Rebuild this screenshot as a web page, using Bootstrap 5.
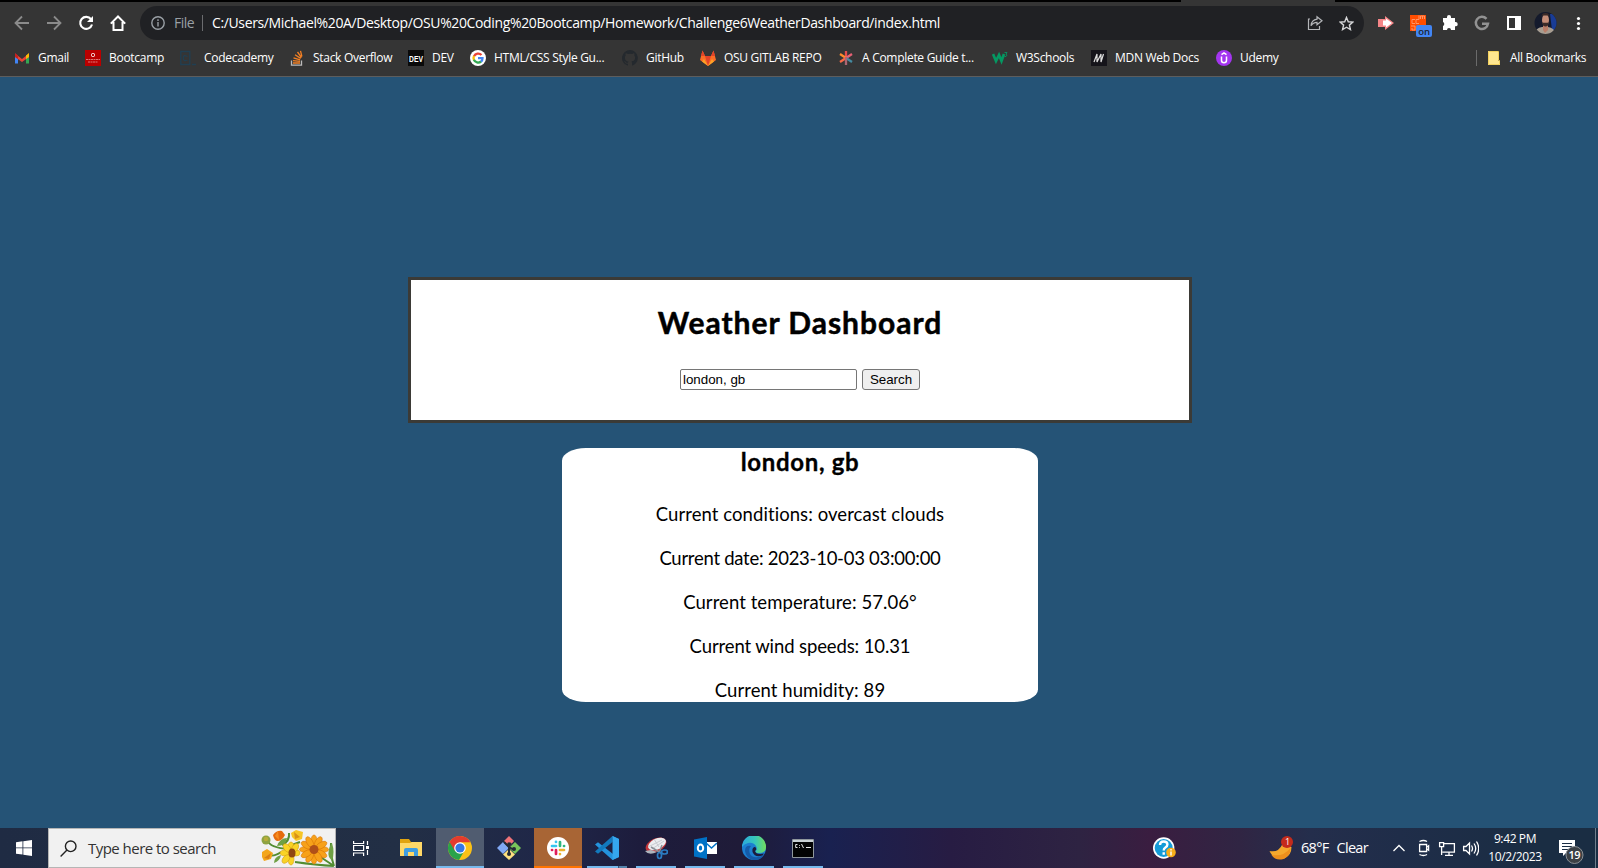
<!DOCTYPE html>
<html lang="en">
<head>
<meta charset="utf-8">
<title>Weather Dashboard</title>
<link rel="stylesheet" href="https://cdn.jsdelivr.net/npm/bootstrap@5.3.0/dist/css/bootstrap.min.css">
<style>
  body { font-family: "Open Sans", "Noto Sans", sans-serif; height: 868px; overflow: hidden; background: #255376; }
  svg { display: block; flex: none; }
  /* Browser chrome */
  .tab-edge { height: 2px; background: #000; }
  .tab-edge i { display: block; width: 154px; height: 2px; margin-left: 1181px; background: #353535; }
  .browser-bar { height: 75px; background: #353535; border-bottom: 1px solid #5d5d5d; color: #fff; }
  .tool-row { height: 41px; padding: 4px 17px 3px 14px; }
  .tool-row > .nav-icons { width: 126px; gap: 16px; }
  .omni { width: 1224px; height: 34px; border-radius: 17px; background: #202124; padding: 0 10px 0 11px; font-size: 14px; }
  .omni .scheme { color: #9aa0a6; letter-spacing: -.5px; width: 28px; margin-left: 9px; }
  .omni .url { letter-spacing: -.37px; margin-left: 9px; white-space: nowrap; }
  .omni .scheme, .omni .url { margin-top: -1px; }
  .omni .bar-line { width: 1px; height: 16px; background: #6b6c6f; }
  .marks-row { display: grid; grid-template-columns: 71px 95px 109px 119px 62px 152px 78px 138px 154px 99px 125px 260px 1fr; height: 30px; padding-left: 14px; align-items: center; font-size: 12px; letter-spacing: -.29px; }
  .marks-row > div { display: flex; align-items: center; gap: 8px; white-space: nowrap; line-height: 16px; }
  /* Weather page */
  .weather-page { height: 751px; padding: 200px 0 0 2px; color: #000; font-variant-ligatures: none; }
  .search-box { width: 784px; height: 146px; border: 3px solid #3b3a36; background: #fff; padding-top: 23px; }
  .search-box h1 { font: bold 30px/38px Lato, sans-serif; letter-spacing: .98px; -webkit-text-stroke: .5px #000; margin: 0 0 28px; }
  .search-box form { gap: 5px; }
  .search-box input { width: 177px; height: 21px; border: 1px solid #767676; border-radius: 2px; padding: 1px 2px; font: 13.333px/15px "Liberation Sans", sans-serif; color: #000; }
  .search-box button { width: 58px; height: 21px; border: 1px solid #767676; border-radius: 3px; padding: 0; background: #efefef; font: 13.333px/15px "Liberation Sans", sans-serif; color: #000; }
  .result-box { width: 476px; height: 254px; margin-top: 25px; background: #fff; border-radius: 5%; font: 18.5px/24px Lato, sans-serif; white-space: nowrap; }
  .result-box h2 { font: bold 24px/28px Lato, sans-serif; letter-spacing: .65px; -webkit-text-stroke: .3px #000; margin: 0 0 26px; }
  .result-box p { margin: 0 0 20px; letter-spacing: .07px; }
  .result-box .ls-date { letter-spacing: -.27px; } .result-box .ls-wind { letter-spacing: -.12px; }
  /* Taskbar */
  .task-bar { height: 40px; color: #fff; background: linear-gradient(90deg, #1f2b43 0, #222f45 400px, #1f2648 560px, #1d1c3c 640px, #1f1b38 740px, #192150 830px, #271c43 950px, #2e2342 1080px, #3a1d40 1150px, #302543 1240px, #242e4c 1310px, #1f2d49 1400px, #1a2d43 1540px); }
  .start-btn { width: 48px; }
  .find-box { width: 288px; height: 40px; margin-right: 2px; background: #f1f1f1; border: 1px solid #b5b5b5; color: #333; font-size: 15px; letter-spacing: -.53px; padding-left: 11px; }
  .find-box span { margin-left: 11px; }
  .app { flex: none; width: 49px; height: 40px; padding-right: 1px; position: relative; }
  .app svg { margin: auto; position: relative; }
  .app.run::after { content: ""; position: absolute; left: 4px; bottom: 0; width: 40px; height: 2px; background: #76b9ed; }
  .app.now::before, .app.alert-on::before { content: ""; position: absolute; inset: 0 1px 0 0; background: #505c70; border-bottom: 2px solid #76b9ed; }
  .app.alert-on::before { background: #a86535; border-color: #ff7300; }
  .app.two::after { background: linear-gradient(90deg, #76b9ed 31px, #1d1c3c 31px, #5484ac 32px); }
  .help-icon { margin: 0 92px 0 325px; }
  .weather-txt { font-size: 14.5px; letter-spacing: -.7px; width: 90px; margin-left: 8px; gap: 8px; white-space: nowrap; }
  .clock { width: 72px; margin-right: 6px; font-size: 12px; line-height: 18px; letter-spacing: -.38px; }
</style>
<script src="https://cdn.jsdelivr.net/npm/bootstrap@5.3.0/dist/js/bootstrap.bundle.min.js"></script>
</head>
<body>
<div class="tab-edge"><i></i></div>
<header class="browser-bar">
  <div class="tool-row d-flex align-items-center">
    <div class="nav-icons d-flex align-items-center">
      <svg width="16" height="16" viewBox="0 0 16 16" fill="none" stroke="#8b8b8b" stroke-width="1.8"><path d="M15 8H2M8 1.5 1.500 8 8 14.500"/></svg>
      <svg width="16" height="16" viewBox="0 0 16 16" fill="none" stroke="#8b8b8b" stroke-width="1.8"><path d="M1 8h13M8 1.500 14.500 8 8 14.500"/></svg>
      <svg width="16" height="16" viewBox="0 0 16 16"><path d="M13 4.200A6 6 0 1 0 14 9.500" fill="none" stroke="#fff" stroke-width="2.100"/><path d="M15 1v6H9z" fill="#fff"/></svg>
      <svg width="16" height="16" viewBox="0 0 16 16" fill="none" stroke="#fff" stroke-width="2"><path d="M.8 8.600 8 1.500l7.200 7.100M3.500 7v8h9V7"/></svg>
    </div>
    <div class="omni d-flex align-items-center">
      <svg width="14" height="14" viewBox="0 0 14 14" fill="none" stroke="#9aa0a6" stroke-width="1.400"><circle cx="7" cy="7" r="6.200"/><path d="M7 6v4.500M7 3.300v1.600"/></svg>
      <span class="scheme">File</span><span class="bar-line"></span>
      <span class="url">C:/Users/Michael%20A/Desktop/OSU%20Coding%20Bootcamp/Homework/Challenge6WeatherDashboard/index.html</span>
      <svg class="ms-auto me-3" width="16" height="16" viewBox="1 0 16 16" fill="none" stroke="#b4b6b9" stroke-width="1.200"><path d="M4 4H2.500v10.500h11V11M11 1.700l5 4-5 4V7.400c-3 0-4.500 1-6 3.300.4-3.700 2.400-6 6-6.500z"/></svg>
      <svg width="15" height="15" viewBox="0 0 16 16" fill="none" stroke="#d4d5d7" stroke-width="1.500"><path d="m8 1.500 1.900 4.600 4.900.4-3.700 3.200 1.100 4.800L8 12l-4.200 2.500 1.100-4.800L1.200 6.500l4.900-.4z"/></svg>
    </div>
    <div class="ms-auto">
      <svg width="203" height="34" viewBox="1378 6 203 34">
        <path d="M1378 19h7v-3l9 7-9 7v-3h-7z" fill="#f58587"/><path d="M1383 20.500h3v-2l6 4.500-6 4.500v-2h-3z" fill="#fff"/>
        <rect x="1410" y="15" width="16" height="16" fill="#ff4d00"/><g fill="none" stroke="#ff9466"><path d="M1415 19.500h-3v4h3M1419 23.500h-3v-4h3v-4M1420.500 19v-3h4v3M1422.500 16v3M1411 26h4v4h-3v-2"/></g>
        <rect x="1416" y="25" width="16" height="12" rx="2" fill="#4285f4"/><text x="1418.300" y="34.800" font-size="9.500" font-weight="600" fill="#1d2430" font-family="Open Sans">on</text>
        <path d="M1443 18h4v-1a2 2 0 0 1 4 0v1h4v4h1a2.200 2.200 0 0 1 0 4.300h-1v3.700h-4a2 2 0 0 0-4 0h-4v-4a2.200 2.200 0 0 0 0-4z" fill="#fff"/>
        <path d="M1486.500 18.800a6.100 6.100 0 1 0 1.500 4.900h-6" fill="none" stroke="#929292" stroke-width="2.500"/>
        <path d="M1508 17h12v12h-12z" fill="none" stroke="#fff" stroke-width="2"/><path d="M1515 17h5v12h-5z" fill="#fff"/>
        <clipPath id="av"><circle cx="1545.500" cy="23" r="11"/></clipPath><g clip-path="url(#av)"><path d="M1534 12h23v23h-23z" fill="#141a2c"/><path d="M1550 14h7v16h-5z" fill="#193c96"/><path d="M1534 35q1-7 8-8h6q7 1 8 8z" fill="#a89e91"/><path d="M1543 24h5v6l-3 3-2-3z" fill="#b97d68"/><ellipse cx="1545.500" cy="20" rx="3.500" ry="6" fill="#c58e78"/><path d="M1541.500 17q0-4 4-4t4 4l-1-1.500h-6zM1542 22.500q3.500.500 7 0l-1 3q-2.500 2-5 0z" fill="#3b2b28"/></g>
        <g fill="#fff"><circle cx="1578.500" cy="18.500" r="1.600"/><circle cx="1578.500" cy="23.500" r="1.600"/><circle cx="1578.500" cy="28.500" r="1.600"/></g>
      </svg>
    </div>
  </div>
  <div class="marks-row">
    <div><svg width="16" height="16" viewBox="0 0 16 16"><path d="M1 4v9.500h3V6z" fill="#4285f4"/><path d="M15 4v9.500h-3V6z" fill="#34a853"/><path d="M1 3.500 8 9l7-5.500V7l-7 5-7-5z" fill="#ea4335"/><path d="M12 5.500 15 3v4l-3 2z" fill="#fbbc04"/><path d="M1 3v4l3 2V5.500z" fill="#c5221f"/></svg><span>Gmail</span></div>
    <div><svg width="16" height="16" viewBox="0 0 16 16"><path d="M0 0h16v16H0z" fill="#bb0000"/><rect x="6.500" y="3.500" width="3" height="3" rx="1" fill="none" stroke="#fff"/><path d="M1 9.500h14M3 12h10" stroke="#dc7777" stroke-dasharray="2 .5"/></svg><span>Bootcamp</span></div>
    <div><svg width="16" height="16" viewBox="0 0 16 16" fill="none" stroke="#203f52" stroke-width="1.300"><path d="M.8 1.500h9v13h-9zM7.500 6.500Q3.300 4 3.300 8t4.200 2M12 14.500h4"/></svg><span>Codecademy</span></div>
    <div><svg width="16" height="16" viewBox="0 0 16 16" fill="none" stroke-width="1.300"><path d="M2.500 10.500v4.700h10v-4.700" stroke="#bcbbbb"/><path d="M4 13h7M4 10.700l7 .7M4.500 7.800l6.600 2M6 4.800l5.700 3.600M8.500 2l4 5.500M11.500.8l1.400 5.700" stroke="#f48024"/></svg><span>Stack Overflow</span></div>
    <div><svg width="16" height="16" viewBox="0 0 16 16"><path d="M0 0h16v16H0z" fill="#0a0a0a"/><text transform="translate(1 11.500) scale(1 1.400)" font-family="Liberation Sans" font-weight="bold" font-size="6.800" letter-spacing="0" fill="#fff">DEV</text></svg><span>DEV</span></div>
    <div><svg width="16" height="16" viewBox="0 0 16 16" fill="none" stroke-width="2.300"><circle cx="8" cy="8" r="8" fill="#fff"/><path d="M4 6.200A4.600 4.600 0 0 1 11.500 5" stroke="#ea4335"/><path d="M4 10a4.600 4.600 0 0 1 0-4" stroke="#fbbc05"/><path d="M3.900 9.800a4.600 4.600 0 0 0 7.200 1.700" stroke="#34a853"/><path d="M8 8.200h4.500a4.600 4.600 0 0 1-1.500 3.500" stroke="#4285f4"/></svg><span>HTML/CSS Style Gu...</span></div>
    <div><svg width="16" height="16" viewBox="0 0 16 16"><path d="M8 0a8 8 0 0 0-2.500 15.600c.4.100.5-.2.500-.4v-1.500c-2.200.5-2.700-.9-2.700-.9-.4-.9-.9-1.200-.9-1.200-.7-.5.100-.5.100-.5.800.100 1.200.8 1.200.8.700 1.200 1.900.9 2.300.7.100-.5.300-.9.500-1.100-1.800-.2-3.600-.9-3.600-4 0-.9.300-1.600.8-2.100-.100-.2-.4-1 .1-2.100 0 0 .7-.2 2.200.8a7.500 7.500 0 0 1 4 0c1.500-1 2.200-.8 2.200-.8.4 1.100.2 1.900.1 2.100.5.600.8 1.300.8 2.100 0 3.100-1.900 3.700-3.700 3.900.3.300.6.800.6 1.500v2.200c0 .2.100.5.600.4A8 8 0 0 0 8 0z" fill="#24292e"/></svg><span>GitHub</span></div>
    <div><svg width="16" height="16" viewBox="0 0 16 16"><path d="m8 16-8-6L2.500.5 5 6h6L13.500.5 16 10z" fill="#fc6d26"/><path d="M8 16 5 6h6z" fill="#e24329"/><path d="m8 16-6-4.500L4 9zM8 16l6-4.500L12 9z" fill="#fca326"/><path d="M2.500.5 5 6H1zM13.500.5 11 6h4z" fill="#e24329"/></svg><span>OSU GITLAB REPO</span></div>
    <div><svg width="16" height="16" viewBox="0 0 16 16" fill="none" stroke-width="2.300"><path d="M8 1v7" stroke="#e64c4c"/><path d="m2 4 6 4" stroke="#ff8a2c"/><path d="m14 4-6 4" stroke="#e76074"/><path d="m2 12 6-4" stroke="#fb6845"/><path d="m14 12-6-4" stroke="#458aa0"/><path d="M8 15V7" stroke="#ae6572"/></svg><span>A Complete Guide t...</span></div>
    <div><svg width="16" height="16" viewBox="0 0 16 16" fill="none" stroke="#059862" stroke-width="2.700"><path d="m1 4 3 7 3-6 2.500 6L12 4"/><path d="M12.500 2.500H15l-1 1.800q2 .5 0 2.200h-1.500" stroke-width=".9"/></svg><span>W3Schools</span></div>
    <div><svg width="16" height="16" viewBox="0 0 16 16"><path d="M0 0h16v16H0z" fill="#15141a"/><path d="M3 12 6 4v8l4-8v8l2.500-8" fill="none" stroke="#ddd" stroke-width="1.200"/></svg><span>MDN Web Docs</span></div>
    <div><svg width="16" height="16" viewBox="0 0 16 16"><circle cx="8" cy="8" r="8" fill="#a435f0"/><path d="M5.500 6.500v3.700q0 2.500 2.500 2.500t2.500-2.500V6.500M5.500 4.700 8 3l2.500 1.700" fill="none" stroke="#fff" stroke-width="1.500"/></svg><span>Udemy</span></div>
    <div><svg width="26" height="18" viewBox="0 0 26 18"><path d="M.5 1v16" stroke="#6b6b6b"/><path d="M12 2h10v10h2v4H12z" fill="#ffe68f"/><path d="M12.500 2.500h10v9h1v4h-11z" fill="none" stroke="#f4d15e"/></svg><span>All Bookmarks</span></div>
  </div>
</header>

<main class="weather-page d-flex flex-column align-items-center text-center">
  <section class="search-box">
    <h1>Weather Dashboard</h1>
    <form class="d-flex justify-content-center">
      <input type="text" value="london, gb"><button type="button">Search</button>
    </form>
  </section>
  <section class="result-box">
    <h2>london, gb</h2>
    <p>Current conditions: overcast clouds</p>
    <p class="ls-date">Current date: 2023-10-03 03:00:00</p>
    <p>Current temperature: 57.06°</p>
    <p class="ls-wind">Current wind speeds: 10.31</p>
    <p>Current humidity: 89</p>
  </section>
</main>

<footer class="task-bar d-flex align-items-center">
  <div class="start-btn"><svg class="mx-auto" width="16" height="16" viewBox="0 0 16 16" fill="#fff"><path d="m0 2.200 6.500-.9v6.200H0zM7.300 1.200 16 0v7.500H7.300zM0 8.300h6.500v6.300L0 13.700zM7.300 8.300H16V16l-8.700-1.300z"/></svg></div>
  <div class="find-box d-flex align-items-center">
    <svg width="17" height="17" viewBox="0 0 17 17" fill="none" stroke="#222" stroke-width="1.400"><circle cx="10.700" cy="6.300" r="5.300"/><path d="M7 10 .6 16.400"/></svg>
    <span>Type here to search</span>
    <svg class="ms-auto" width="74" height="38" viewBox="0 0 74 38">
      <g fill="none" stroke="#528d32" stroke-width="2"><path d="M73 37Q55 36 34 33M73 37Q69 25 70 14M6 11q3 8 22 9M8 26q5 2 12-3M28 4q1 8-7 12M39 13l-11 4M73 37 55 25"/></g>
      <path d="M68 28q-2-7 3-14 3 9 0 18zM13 34q0-6 7-8-1 6-7 8zM16 17q3-8 10-8-1 8-10 8z" fill="#6fa044"/>
      <circle cx="5" cy="11" r="4.500" fill="#8ea342"/><circle cx="5" cy="10" r="2.300" fill="#b7ad3a"/>
      <path d="M12 6q4-5 9-4l3 4q-3 6-8 6-3-1-4-6z" fill="#e56b0d"/><path d="m14 7 3-5 1 9" fill="#f78d20"/>
      <path d="m30 4 5-3 7 2-1 7-6 2-4-4z" fill="#f7c525"/><path d="m34 10-1-7 6 5" fill="#d99216"/>
      <path d="m1 23 5-3 6 4-2 6-7 2-2-4z" fill="#f3a61b"/><path d="m3 29 7-5-2 6" fill="#db7e12"/>
      <g fill="#f9d326" stroke="#d6a010" stroke-width=".6"><ellipse cx="30" cy="18" rx="3" ry="5"/><ellipse cx="30" cy="30" rx="3" ry="6"/><ellipse cx="24" cy="24" rx="5" ry="3"/><ellipse cx="35" cy="24" rx="4" ry="3"/><ellipse cx="26" cy="19" rx="3" ry="5" transform="rotate(-40 26 19)"/><ellipse cx="25" cy="30" rx="3" ry="5" transform="rotate(40 25 30)"/><ellipse cx="34" cy="19" rx="3" ry="5" transform="rotate(30 34 19)"/></g><ellipse cx="31" cy="24" rx="3.500" ry="4.500" fill="#8f4612"/>
      <g fill="#f7a11a" stroke="#d97808" stroke-width=".6"><g id="petals"><ellipse cx="53" cy="12" rx="3" ry="6"/><ellipse cx="53" cy="29" rx="3" ry="6"/><ellipse cx="44.500" cy="20.500" rx="6" ry="3"/><ellipse cx="61.500" cy="20.500" rx="6" ry="3"/></g><use href="#petals" transform="rotate(30 53 20.500)"/><use href="#petals" transform="rotate(60 53 20.500)"/></g><circle cx="53" cy="20.500" r="4.500" fill="#b04f18"/>
    </svg>
  </div>
  <div class="app d-flex"><svg width="18" height="18" viewBox="1 0 18 18" fill="none" stroke="#fff" stroke-width="1.200"><path d="M1.600 2v2.500h10V2M1.600 17v-3h10v3M1.600 6.500h10v5h-10zM15.500 2v4M15.500 11v5"/><path d="M14 7h3v3h-3z" fill="#fff" stroke="none"/></svg></div>
  <div class="app d-flex"><svg width="22" height="20" viewBox="0 0 22 20"><path d="M0 1h9l2 3h11v14H0z" fill="#e2a40f"/><path d="M0 5h10l2-1h10v14H0z" fill="#ffd867"/><path d="M4 18v-6q0-2 2-2h10q2 0 2 2v6h-4v-4H8v4z" fill="#3f9de0"/></svg></div>
  <div class="app now d-flex"><svg width="24" height="24" viewBox="0 0 24 24"><circle cx="12" cy="12" r="12" fill="#fbc116"/><path d="M12 12 1.600 6A12 12 0 0 0 11 24l5.500-9.500z" fill="#29a34a"/><path d="M12 6.200h10.400A12 12 0 0 0 1.600 6L7 15z" fill="#e33b2e"/><circle cx="12" cy="12" r="5.800" fill="#fff"/><circle cx="12" cy="12" r="4.600" fill="#3577e5"/></svg></div>
  <div class="app d-flex"><svg width="24" height="24" viewBox="0 0 24 24"><path d="m12 0 5 5-5 6-5-6z" fill="#ef7378"/><path d="m0 12 6-6 6 6-6 6z" fill="#81a9f5"/><path d="m12 12 6-6 6 6-6 6z" fill="#79c65a"/><path d="m12 13 6 5.500-6 5.500-6-5.500z" fill="#ffe180"/><path d="m7 6 5 5v7m0-7 5 3M12 10l2-3" fill="none" stroke="#252b36" stroke-width="2"/><g fill="#252b36"><circle cx="12" cy="18" r="2"/><circle cx="17" cy="13" r="2"/><circle cx="12" cy="8" r="1.800"/></g></svg></div>
  <div class="app alert-on d-flex"><svg width="22" height="22" viewBox="0 0 22 22"><circle cx="11" cy="11" r="11" fill="#fff"/><g fill="none" stroke-width="2.700" stroke-linecap="round"><path d="M5 9h4M9 4.800v.1" stroke="#36c5f0"/><path d="M13 5v4M17 9h.1" stroke="#2eb67d"/><path d="M13 13h4M13 17v.1" stroke="#ecb22e"/><path d="M9 13v4M5 13h.1" stroke="#e01e5a"/></g></svg></div>
  <div class="app run two d-flex"><svg width="24" height="24" viewBox="0 0 24 24"><path d="M17.500 0 24 3v18l-6.500 3L0 8.500l3-2.300L18 18V6z" fill="#2493dd"/><path d="M0 15.500 17.500 0v6L3 17.800z" fill="#1279bd"/><path d="M17.500 0 24 3v18l-6.500 3z" fill="#35a7ee"/></svg></div>
  <div class="app run d-flex"><svg width="24" height="24" viewBox="0 0 24 24"><ellipse cx="12" cy="9" rx="11" ry="6.500" transform="rotate(-25 12 9)" fill="#c2363b"/><ellipse cx="13" cy="8" rx="9.500" ry="5.400" transform="rotate(-25 13 8)" fill="#eceef0"/><path d="m4 11 14-7M8 13 20 5M10 3l5 8" stroke="#c8cbd0"/><path d="M1 15q4 5 12 1l-6-2z" fill="#aeb5bd"/><path d="m7 11 10 6M18 9l-3 8" stroke="#8b9097" stroke-width="1.500"/><g fill="none" stroke="#2b7cc2" stroke-width="1.700"><ellipse cx="15.500" cy="19.500" rx="2" ry="3"/><ellipse cx="20.500" cy="16" rx="3" ry="2"/></g></svg></div>
  <div class="app run d-flex"><svg width="23" height="22" viewBox="0 0 23 22"><path d="M11 5h12v12H11z" fill="#fff"/><path d="m12 6 5.500 5L23 6" fill="none" stroke="#0072c6" stroke-width="1.500"/><path d="M0 2.500 13 0v22L0 19.500z" fill="#0072c6"/><ellipse cx="6.500" cy="11" rx="2.700" ry="3.500" fill="none" stroke="#fff" stroke-width="2"/></svg></div>
  <div class="app run d-flex"><svg width="24" height="24" viewBox="0 0 24 24"><defs><linearGradient id="eg"><stop stop-color="#2aa8dc"/><stop offset=".55" stop-color="#37c7b9"/><stop offset="1" stop-color="#73dc5c"/></linearGradient></defs><circle cx="12" cy="12" r="12" fill="#1c7fd0"/><path d="M0 11A12 12 0 0 1 24 11q0 6-7 6-4 0-3.500-2 2-1 1-4Q12 6 6 7q-4 1-6 4z" fill="url(#eg)"/><path d="M9 10q-3 3-1 8 4 6 14 1-4 6-11 5Q4 22 3 15q0-6 6-5z" fill="#145ba8"/><path d="M11 12q2-2 3 0 1 2-1 3 1 4 9 2.500l-1.500 2Q13 22 10.500 16q-.5-3 .5-4z" fill="#1b1c3d"/></svg></div>
  <div class="app run d-flex"><svg width="22" height="19" viewBox="0 0 22 19"><path d="M.5.5h21v18H.5z" fill="#030303" stroke="#8f979c"/><path d="M1 1h20v2H1z" fill="#c9d0d3"/><path d="M5.500 5.500H3.700v3h1.800M7.500 6v.8M7.500 8v.8M9.500 5l2 4M14 8.500h5" stroke="#e7e7e7" fill="none"/></svg></div>

  <svg class="help-icon" width="24" height="22" viewBox="0 0 24 22"><circle cx="10.700" cy="11" r="10.700" fill="#fff"/><circle cx="10.700" cy="11" r="9" fill="#149bd7"/><path d="M7 8q0-3.500 3.700-3.500t3.700 3q0 1.800-2 3-1.700 1-1.700 3M10.700 15.300v2.500" fill="none" stroke="#fff" stroke-width="2.400"/><circle cx="18" cy="15.500" r="4.800" fill="#f8ad19"/><path d="M18 14.500v4M18 12v1.500" stroke="#fff" stroke-width="1.400"/></svg>
  <svg width="24" height="24" viewBox="0 0 24 24"><path d="M.5 15q9 2 13-7l9 3q0 8-7 11.500Q5 25 .5 15z" fill="#f5a82d"/><path d="M2.500 19q12 2 19-7 0 8-7 11-8 2-12-4z" fill="#ed8f1c"/><circle cx="18" cy="6" r="6" fill="#c42b1c"/><text x="16" y="9.200" font-size="9" fill="#fff">1</text></svg>
  <div class="weather-txt d-flex"><span>68°F</span><span>Clear</span></div>
  <svg width="88" height="20" viewBox="1391 838 88 20" fill="none" stroke="#fff" stroke-width="1.300">
    <path d="m1393.500 851 5.500-5.500 5.500 5.500"/>
    <path d="M1419.600 844.500h7v7h-7zM1426.600 847.200l2-1.500v4.600l-2-1.500M1419.500 841.500q4-2 7.500 0M1419.500 854.500q4 2 7.500 0"/>
    <path d="M1443 843.600h11.400v8.500h-12M1449 852.100v3M1445 855.300h8M1439.600 842.600h4v4h-4zM1441.600 846.600v8.500"/>
    <path d="M1463.600 846.500h2.400l3.500-3.500v11l-3.500-3.500h-2.400zM1471.500 845.500q2 3 0 6M1474 843.500q3.500 5 0 10M1476.500 841.500q4.500 7 0 14"/>
  </svg>
  <div class="clock text-center"><div>9:42 PM</div><div>10/2/2023</div></div>
  <svg width="28" height="32" viewBox="1557 832 28 32"><path d="M1559 840h16v13h-9l-3 3v-3h-4z" fill="#fff"/><path d="M1562 843.500h10M1562 846.500h10M1562 849.500h6" stroke="#1b2d44"/><circle cx="1574.500" cy="855" r="8.500" fill="#3b4045" stroke="#8b9096"/><text x="1574.300" y="859" text-anchor="middle" font-size="11" font-weight="600" letter-spacing="-.4" fill="#fff">19</text></svg>
  <svg class="ms-auto" width="3" height="40" viewBox="0 0 3 40"><path d="M.5 0v40" stroke="#6f7e8c"/></svg>
</footer>
</body>
</html>
